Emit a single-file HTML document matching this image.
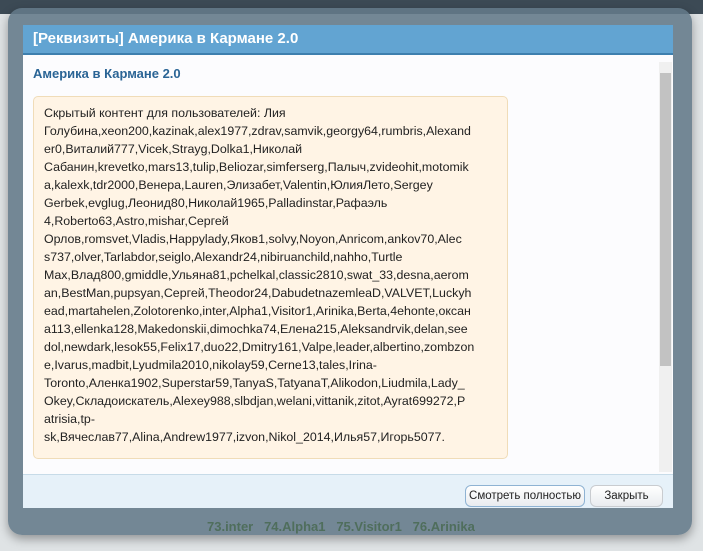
<!DOCTYPE html>
<html><head><meta charset="utf-8"><style>
*{margin:0;padding:0;box-sizing:border-box}
body{width:703px;height:551px;overflow:hidden;background:#dfe3e5;font-family:"Liberation Sans",Arial,sans-serif;position:relative}
.topbar{position:absolute;left:0;top:0;width:703px;height:14px;background:#3c4a55}
.bg{position:absolute;color:#4f6e5c;font-weight:bold;font-size:13px}
.frame{position:absolute;left:8px;top:8px;width:684px;height:527px;background:rgba(100,122,138,0.88);border-radius:14px;box-shadow:0 4px 10px rgba(0,0,0,.35)}
.dlg{position:absolute;left:23px;top:25px;width:650px;height:483px;background:#fcfcfe}
.title{height:30px;background:#62a4d2;border-bottom:2px solid #3e7fae;color:#fff;font-weight:bold;font-size:15px;line-height:28px;padding-left:10px}
.h{position:absolute;left:10px;top:41px;color:#2a6495;font-weight:bold;font-size:13px}
.box{position:absolute;left:10px;top:71px;width:475px;height:363px;background:#fff4e5;border:1px solid #f0dcb8;border-radius:5px;padding:7px 0 0 10px;font-size:12.4px;line-height:18px;color:#222;white-space:nowrap}
.sb{position:absolute;left:636px;top:37px;width:13px;height:410px;background:#f0f0f0}
.thumb{position:absolute;left:1px;top:11px;width:11px;height:293px;background:#c2c2c2}
.foot{position:absolute;left:0;top:449px;width:650px;height:34px;background:#e6f1f9;border-top:1px solid #c7dbe8}
.btn{position:absolute;top:10px;height:22px;font-size:11.5px;line-height:20px;text-align:center;border:1px solid #c9ccd0;border-radius:6px;background:linear-gradient(#fff,#e9ecef);color:#222}
</style></head><body>
<div class="topbar"></div>
<div class="frame"></div>
<div class="bg" style="left:207px;top:519px">73.inter&nbsp;&nbsp; 74.Alpha1&nbsp;&nbsp; 75.Visitor1&nbsp;&nbsp; 76.Arinika</div>
<div class="dlg">
<div class="title">[Реквизиты] Америка в Кармане 2.0</div>
<div class="h">Америка в Кармане 2.0</div>
<div class="box">Скрытый контент для пользователей: Лия<br>Голубина,xeon200,kazinak,alex1977,zdrav,samvik,georgy64,rumbris,Alexand<br>er0,Виталий777,Vicek,Strayg,Dolka1,Николай<br>Сабанин,krevetko,mars13,tulip,Beliozar,simferserg,Палыч,zvideohit,motomik<br>a,kalexk,tdr2000,Венера,Lauren,Элизабет,Valentin,ЮлияЛето,Sergey<br>Gerbek,evglug,Леонид80,Николай1965,Palladinstar,Рафаэль<br>4,Roberto63,Astro,mishar,Сергей<br>Орлов,romsvet,Vladis,Happylady,Яков1,solvy,Noyon,Anricom,ankov70,Alec<br>s737,olver,Tarlabdor,seiglo,Alexandr24,nibiruanchild,nahho,Turtle<br>Max,Влад800,gmiddle,Ульяна81,pchelkal,classic2810,swat_33,desna,aerom<br>an,BestMan,pupsyan,Сергей,Theodor24,DabudetnazemleaD,VALVET,Luckyh<br>ead,martahelen,Zolotorenko,inter,Alpha1,Visitor1,Arinika,Berta,4ehonte,оксан<br>а113,ellenka128,Makedonskii,dimochka74,Елена215,Aleksandrvik,delan,see<br>dol,newdark,lesok55,Felix17,duo22,Dmitry161,Valpe,leader,albertino,zombzon<br>e,Ivarus,madbit,Lyudmila2010,nikolay59,Cerne13,tales,Irina-<br>Toronto,Аленка1902,Superstar59,TanyaS,TatyanaT,Alikodon,Liudmila,Lady_<br>Okey,Складоискатель,Alexey988,slbdjan,welani,vittanik,zitot,Ayrat699272,P<br>atrisia,tp-<br>sk,Вячеслав77,Alina,Andrew1977,izvon,Nikol_2014,Илья57,Игорь5077.</div>
<div class="sb"><div class="thumb"></div></div>
<div class="foot">
<div class="btn" style="left:442px;width:120px;border-color:#8fb3d3">Смотреть полностью</div>
<div class="btn" style="left:567px;width:73px">Закрыть</div>
</div>
</div>
</body></html>
